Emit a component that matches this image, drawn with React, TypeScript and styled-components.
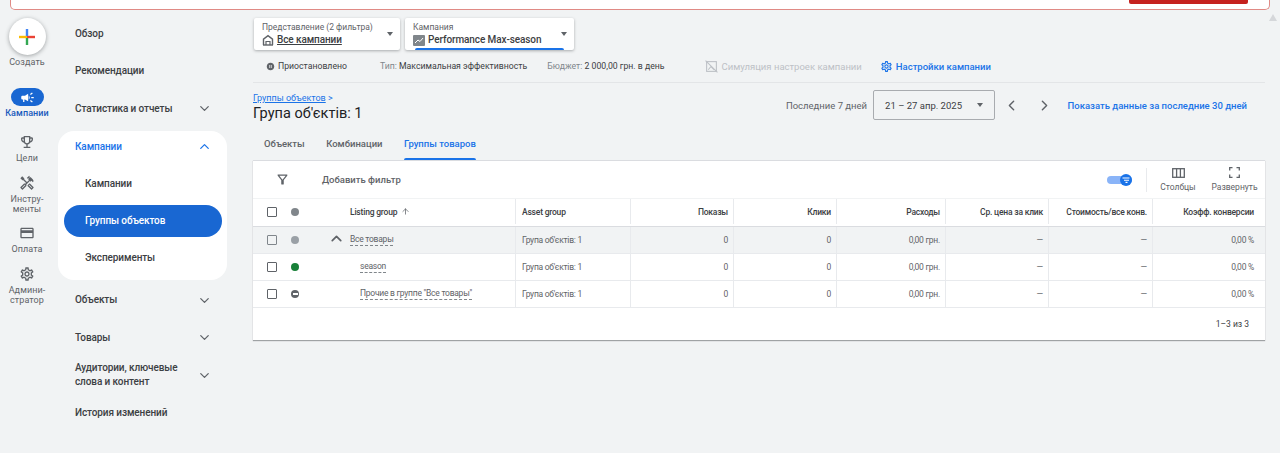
import React from 'react';
import styled, { createGlobalStyle } from 'styled-components';
import { ChevronDown, ChevronUp, ChevronLeft, ChevronRight, ArrowUp } from 'lucide-react';
import {
    MdCampaign,
    MdOutlineEmojiEvents,
    MdOutlineHandyman,
    MdOutlineCreditCard,
    MdOutlineSettings,
    MdOutlineFilterAlt,
    MdPauseCircleFilled,
} from 'react-icons/md';

const GlobalStyle = createGlobalStyle`
    html, body {
        margin: 0;
        padding: 0;
        background: #f1f3f4;
        overflow: hidden;
    }
    body {
        font-family: Roboto, 'Liberation Sans', sans-serif;
        color: #3c4043;
    }
`;

const Page = styled.div`
    width: 1280px;
    height: 453px;
    display: flex;
    flex-direction: column;
    position: relative;
    overflow: hidden;
`;

const Banner = styled.div`
    height: 9px;
    margin: 0 10px;
    padding-right: 21px;
    background: #fff;
    border: 1px solid #e08a85;
    border-top: 0;
    border-radius: 0 0 5px 5px;
    display: flex;
    justify-content: flex-end;
`;

const BannerButton = styled.div`
    width: 119px;
    height: 4px;
    background: #c5221f;
    border-radius: 0 0 2px 2px;
`;

const ScrollArrow = styled.div`
    position: absolute;
    top: 14px;
    right: 3px;
    width: 0;
    height: 0;
    border-left: 4.5px solid transparent;
    border-right: 4.5px solid transparent;
    border-bottom: 7px solid #d5d7da;
`;

const Body = styled.div`
    display: flex;
    flex: 1;
`;

const Rail = styled.nav`
    width: 54px;
    flex: none;
    display: flex;
    flex-direction: column;
    align-items: center;
    padding-top: 8px;
`;

const CreateButton = styled.div`
    width: 37px;
    height: 37px;
    border-radius: 50%;
    background: #fff;
    box-shadow: 0 1px 4px rgba(60, 64, 67, 0.45);
    display: flex;
    align-items: center;
    justify-content: center;
`;

const RailLabel = styled.span<{ $active?: boolean; $top?: number }>`
    font-size: 9px;
    line-height: 10px;
    margin-top: ${p => p.$top ?? 3}px;
    text-align: center;
    white-space: nowrap;
    color: ${p => (p.$active ? '#185abc' : '#5f6368')};
    font-weight: ${p => (p.$active ? 500 : 400)};
    letter-spacing: 0.1px;
`;

const RailItem = styled.div<{ $gap: number }>`
    display: flex;
    flex-direction: column;
    align-items: center;
    margin-top: ${p => p.$gap}px;
    color: #5f6368;
`;

const ActivePill = styled.div`
    width: 33px;
    height: 18px;
    border-radius: 9px;
    background: #1967d2;
    color: #fff;
    display: flex;
    align-items: center;
    justify-content: center;
`;

const Nav = styled.nav`
    width: 169px;
    margin-left: 4px;
    flex: none;
    padding-top: 5px;
`;

const NavRow = styled.div<{ $sub?: boolean; $open?: boolean; $height?: number }>`
    height: ${p => p.$height ?? 37.5}px;
    display: flex;
    align-items: center;
    justify-content: space-between;
    padding: 0 15px 0 ${p => (p.$sub ? 27 : 17)}px;
    font-size: 10px;
    font-weight: 500;
    line-height: 14px;
    letter-spacing: -0.1px;
    color: ${p => (p.$open ? '#1a73e8' : '#3c4043')};
`;

const NavCard = styled.div`
    background: #fff;
    border-radius: 16px;
    margin: 3px 0 2px;
`;

const SelectedPill = styled.div`
    height: 32px;
    margin: 0 5.5px 0 6px;
    padding-left: 21px;
    border-radius: 16px;
    background: #1967d2;
    color: #fff;
    font-size: 10px;
    font-weight: 500;
    letter-spacing: -0.1px;
    display: flex;
    align-items: center;
`;

const Main = styled.main`
    width: 1012px;
    margin-left: 26px;
    flex: none;
    padding-top: 8px;
`;

const PickerRow = styled.div`
    display: flex;
    gap: 5px;
    padding-left: 1px;
`;

const Picker = styled.div<{ $width: number }>`
    width: ${p => p.$width}px;
    height: 32px;
    box-sizing: border-box;
    padding: 4px 8px 0;
    background: #fff;
    border-radius: 2px;
    box-shadow: 0 1px 3px rgba(60, 64, 67, 0.4);
    position: relative;
`;

const PickerLabel = styled.div`
    font-size: 8.5px;
    line-height: 11px;
    color: #5f6368;
`;

const PickerValue = styled.div`
    display: flex;
    align-items: center;
    gap: 3px;
    font-size: 10px;
    line-height: 14px;
    font-weight: 500;
    letter-spacing: -0.1px;
    color: #3c4043;
`;

const Underlined = styled.span`
    text-decoration: underline;
`;

const Caret = styled.span`
    position: absolute;
    top: 14px;
    right: 7px;
    border-left: 3.5px solid transparent;
    border-right: 3.5px solid transparent;
    border-top: 4px solid #5f6368;
`;

const PickerBar = styled.span`
    position: absolute;
    left: 10px;
    bottom: 0;
    width: 149px;
    height: 2px;
    background: #1a73e8;
    border-radius: 2px 2px 0 0;
`;

const StatusRow = styled.div`
    height: 32px;
    display: flex;
    align-items: center;
    border-bottom: 1px solid #e3e5e7;
    font-size: 8.7px;
    color: #3c4043;
`;

const StatusPart = styled.span<{ $left: number }>`
    margin-left: ${p => p.$left}px;
    white-space: pre;
`;

const PausedState = styled.span`
    margin-left: 13px;
    display: flex;
    align-items: center;
    gap: 3px;
    color: #3c4043;
`;

const Muted = styled.span`
    color: #80868b;
`;

const StatusLink = styled.span<{ $left: number; $off?: boolean }>`
    margin-left: ${p => p.$left}px;
    display: flex;
    align-items: center;
    gap: ${p => (p.$off ? 4 : 3)}px;
    font-size: 9.5px;
    font-weight: ${p => (p.$off ? 400 : 500)};
    color: ${p => (p.$off ? '#bdc1c6' : '#1a73e8')};
`;

const TitleRow = styled.div`
    height: 45px;
    display: flex;
    align-items: flex-start;
    justify-content: space-between;
`;

const TitleBlock = styled.div`
    padding-top: 10px;
`;

const Crumb = styled.div`
    font-size: 9px;
    line-height: 10px;
    color: #1a73e8;
    span {
        text-decoration: underline;
    }
`;

const Title = styled.h1`
    margin: 1px 0 0;
    font-size: 14.5px;
    line-height: 20px;
    font-weight: 400;
    color: #202124;
`;

const DateTools = styled.div`
    height: 30px;
    margin: 7px 18px 0 0;
    display: flex;
    align-items: center;
    font-size: 9.5px;
    color: #5f6368;
`;

const DateBox = styled.div`
    width: 122px;
    height: 30px;
    box-sizing: border-box;
    margin-left: 6px;
    padding: 0 11px;
    border: 1px solid #a8abaf;
    border-radius: 2px;
    display: flex;
    align-items: center;
    justify-content: space-between;
    color: #3c4043;
`;

const DateCaret = styled(Caret)`
    position: static;
`;

const PagerIcons = styled.div`
    display: flex;
    gap: 16px;
    margin: 0 15px 0 7.5px;
    color: #5f6368;
`;

const DateLink = styled.span`
    color: #1a73e8;
    font-weight: 500;
`;

const Tabs = styled.div`
    height: 32px;
    display: flex;
    align-items: stretch;
    gap: 21.5px;
    padding-left: 11px;
`;

const Tab = styled.div<{ $active?: boolean }>`
    display: flex;
    align-items: center;
    padding-bottom: 1px;
    font-size: 9.5px;
    font-weight: 500;
    color: ${p => (p.$active ? '#1a73e8' : '#5f6368')};
    position: relative;
    &::after {
        content: '';
        display: ${p => (p.$active ? 'block' : 'none')};
        position: absolute;
        left: 0;
        right: 0;
        bottom: 0;
        height: 2px;
        background: #1a73e8;
        border-radius: 2px 2px 0 0;
    }
`;

const Card = styled.section`
    background: #fff;
    border-top: 1px solid #dadce0;
    box-shadow: 0 1px 1px rgba(60, 64, 67, 0.45);
`;

const Toolbar = styled.div`
    height: 37px;
    display: flex;
    align-items: center;
    color: #5f6368;
`;

const FilterIcon = styled.div`
    margin-left: 22px;
    display: flex;
    color: #5f6368;
`;

const AddFilter = styled.span`
    margin-left: 32px;
    font-size: 9.5px;
    font-weight: 500;
    flex: 1;
`;

const Toggle = styled.div`
    width: 25px;
    height: 8px;
    border-radius: 4px;
    background: #8ab4f8;
    position: relative;
    margin-right: 14.5px;
`;

const Knob = styled.div`
    position: absolute;
    right: 0;
    top: -2px;
    width: 12px;
    height: 12px;
    border-radius: 50%;
    background: #1a73e8;
    display: flex;
    align-items: center;
    justify-content: center;
`;

const ToolDivider = styled.div`
    width: 1px;
    height: 24px;
    background: #e8eaed;
    margin-right: 13px;
`;

const ToolButton = styled.div<{ $width: number; $left?: number }>`
    width: ${p => p.$width}px;
    margin-left: ${p => p.$left ?? 0}px;
    display: flex;
    flex-direction: column;
    align-items: center;
    gap: 4px;
    font-size: 8.5px;
    line-height: 10px;
    color: #5f6368;
`;

const ToolIconSlot = styled.div`
    height: 11px;
    display: flex;
    align-items: center;
`;

const ToolEnd = styled.div`
    width: 7.5px;
`;

const COLUMNS = '38px 8px 217px 115px 103px 103px 109px 103px 104px 112px';

const HeaderRow = styled.div`
    height: 29px;
    padding-bottom: 2px;
    display: grid;
    grid-template-columns: ${COLUMNS};
    border-top: 1px solid #f1f3f4;
    border-bottom: 1px solid #dadce0;
    box-sizing: border-box;
    font-size: 8.5px;
    font-weight: 500;
    letter-spacing: -0.2px;
    color: #3c4043;
`;

const Row = styled.div<{ $shaded?: boolean }>`
    height: 27px;
    display: grid;
    grid-template-columns: ${COLUMNS};
    background: ${p => (p.$shaded ? '#f1f3f4' : '#fff')};
    border-bottom: 1px solid #e8eaed;
    box-sizing: border-box;
    font-size: 8.5px;
    letter-spacing: -0.25px;
    color: #5f6368;
`;

const CheckCell = styled.div`
    display: flex;
    align-items: center;
    justify-content: center;
`;

const Check = styled.span<{ $soft?: boolean }>`
    width: 10px;
    height: 10px;
    box-sizing: border-box;
    border: 1px solid ${p => (p.$soft ? '#80868b' : '#5f6368')};
    border-radius: 1px;
`;

const DotCell = styled.div`
    display: flex;
    align-items: center;
    justify-content: center;
`;

const Dot = styled.span<{ $color: string }>`
    flex: none;
    width: 8px;
    height: 8px;
    border-radius: 50%;
    background: ${p => p.$color};
    position: relative;
`;

const Dash = styled.span`
    position: absolute;
    left: 1.5px;
    top: 3px;
    width: 5px;
    height: 2px;
    background: #fff;
`;

const ListingCell = styled.div<{ $indent: number }>`
    display: flex;
    align-items: center;
    padding-left: ${p => p.$indent}px;
    border-right: 1px solid #e8eaed;
    position: relative;
`;

const Tree = styled.span`
    position: absolute;
    left: 29px;
    top: 3px;
    color: #5f6368;
    display: flex;
`;

const SortArrow = styled(ArrowUp)`
    margin-left: 4px;
    color: #5f6368;
`;

const Dashed = styled.span`
    border-bottom: 1px dashed #80868b;
    line-height: 11px;
`;

const Cell = styled.div<{ $left?: boolean; $last?: boolean }>`
    display: flex;
    align-items: center;
    justify-content: ${p => (p.$left ? 'flex-start' : 'flex-end')};
    padding: ${p => (p.$left ? '0 0 0 6px' : p.$last ? '0 11px 0 0' : '0 5px 0 0')};
    border-right: ${p => (p.$last ? 0 : '1px solid #e8eaed')};
    white-space: nowrap;
`;

const Footer = styled.div`
    height: 32px;
    display: flex;
    align-items: center;
    justify-content: flex-end;
    padding-right: 16px;
    font-size: 8.5px;
    color: #3c4043;
`;

const PlusIcon = () => (
    <svg width="16" height="16" viewBox="0 0 16 16">
        <rect x="0" y="6.8" width="8" height="2.4" fill="#fbbc04" />
        <rect x="8" y="6.8" width="8" height="2.4" fill="#ea4335" />
        <rect x="6.8" y="0" width="2.4" height="7" fill="#4285f4" />
        <rect x="6.8" y="9" width="2.4" height="7" fill="#34a853" />
    </svg>
);

const HomeIcon = () => (
    <svg width="12" height="12" viewBox="0 0 12 12" fill="none" stroke="#5f6368" strokeWidth="1.4">
        <path d="M1.5 11V5.2L6 1.6l4.5 3.6V11" />
        <path d="M4 11V7.5h4V11" strokeWidth="1.2" />
        <path d="M1 11h10" />
    </svg>
);

const PerfIcon = () => (
    <svg width="12" height="11" viewBox="0 0 12 11">
        <rect width="12" height="11" rx="1" fill="#80868b" />
        <path d="M2 8l3-3 2 1.5L10 3" fill="none" stroke="#fff" strokeWidth="1" />
    </svg>
);

const SimIcon = () => (
    <svg width="13" height="13" viewBox="0 0 12 12" fill="none" stroke="#bdc1c6" strokeWidth="1">
        <rect x="1.5" y="1.5" width="9" height="9" />
        <path d="M0.5 0.5l11 11M3 9l2.5-3 3 3" />
    </svg>
);

const KnobIcon = () => (
    <svg width="8" height="8" viewBox="0 0 8 8" stroke="#fff" strokeWidth="1.1" fill="none">
        <path d="M0.5 2h7M2 4.2h5M3.5 6.4h2" />
    </svg>
);

const ExpandIcon = () => (
    <svg width="11" height="11" viewBox="0 0 11 11" fill="none" stroke="#5f6368" strokeWidth="1.3">
        <path d="M0.7 3.5V0.7h2.8M7.5 0.7h2.8v2.8M10.3 7.5v2.8H7.5M3.5 10.3H0.7V7.5" />
    </svg>
);

const ColumnsIcon = () => (
    <svg width="13" height="10" viewBox="0 0 13 10" fill="none" stroke="#5f6368" strokeWidth="1.3">
        <rect x="0.7" y="0.7" width="11.6" height="8.6" />
        <path d="M4.6 0.7v8.6M8.4 0.7v8.6" />
    </svg>
);

const rows = [
    { name: 'Все товары', indent: 51, shaded: true, dot: '#9aa0a6' },
    { name: 'season', indent: 61, dot: '#188038' },
    { name: 'Прочие в группе "Все товары"', indent: 61, dot: '#5f6368', excluded: true },
];

const App = () => {
    return (
        <Page>
            <GlobalStyle />
            <Banner>
                <BannerButton />
            </Banner>
            <ScrollArrow />
            <Body>
                <Rail>
                    <CreateButton>
                        <PlusIcon />
                    </CreateButton>
                    <RailLabel $top={2}>Создать</RailLabel>
                    <RailItem $gap={21}>
                        <ActivePill>
                            <MdCampaign size={15} />
                        </ActivePill>
                        <RailLabel $active $top={2}>
                            Кампании
                        </RailLabel>
                    </RailItem>
                    <RailItem $gap={16}>
                        <MdOutlineEmojiEvents size={16} />
                        <RailLabel>Цели</RailLabel>
                    </RailItem>
                    <RailItem $gap={12}>
                        <MdOutlineHandyman size={16} />
                        <RailLabel>
                            Инстру-
                            <br />
                            менты
                        </RailLabel>
                    </RailItem>
                    <RailItem $gap={11}>
                        <MdOutlineCreditCard size={16} />
                        <RailLabel>Оплата</RailLabel>
                    </RailItem>
                    <RailItem $gap={12}>
                        <MdOutlineSettings size={16} />
                        <RailLabel>
                            Админи-
                            <br />
                            стратор
                        </RailLabel>
                    </RailItem>
                </Rail>
                <Nav>
                    <NavRow>Обзор</NavRow>
                    <NavRow>Рекомендации</NavRow>
                    <NavRow>
                        Статистика и отчеты
                        <ChevronDown size={15} color="#5f6368" />
                    </NavRow>
                    <NavCard>
                        <NavRow $open $height={32}>
                            Кампании
                            <ChevronUp size={15} color="#1a73e8" />
                        </NavRow>
                        <NavRow $sub $height={42}>
                            Кампании
                        </NavRow>
                        <SelectedPill>Группы объектов</SelectedPill>
                        <NavRow $sub $height={43}>
                            Эксперименты
                        </NavRow>
                    </NavCard>
                    <NavRow>
                        Объекты
                        <ChevronDown size={15} color="#5f6368" />
                    </NavRow>
                    <NavRow>
                        Товары
                        <ChevronDown size={15} color="#5f6368" />
                    </NavRow>
                    <NavRow>
                        <span>
                            Аудитории, ключевые
                            <br />
                            слова и контент
                        </span>
                        <ChevronDown size={15} color="#5f6368" />
                    </NavRow>
                    <NavRow>История изменений</NavRow>
                </Nav>
                <Main>
                    <PickerRow>
                        <Picker $width={146}>
                            <PickerLabel>Представление (2 фильтра)</PickerLabel>
                            <PickerValue>
                                <HomeIcon />
                                <Underlined>Все кампании</Underlined>
                            </PickerValue>
                            <Caret />
                        </Picker>
                        <Picker $width={169}>
                            <PickerLabel>Кампания</PickerLabel>
                            <PickerValue>
                                <PerfIcon />
                                Performance Max-season
                            </PickerValue>
                            <Caret />
                            <PickerBar />
                        </Picker>
                    </PickerRow>
                    <StatusRow>
                        <PausedState>
                            <MdPauseCircleFilled size={9} color="#5f6368" />
                            Приостановлено
                        </PausedState>
                        <StatusPart $left={33}>
                            <Muted>Тип:</Muted> Максимальная эффективность
                        </StatusPart>
                        <StatusPart $left={20}>
                            <Muted>Бюджет:</Muted> 2 000,00 грн. в день
                        </StatusPart>
                        <StatusLink $left={40} $off>
                            <SimIcon />
                            Симуляция настроек кампании
                        </StatusLink>
                        <StatusLink $left={18}>
                            <MdOutlineSettings size={13} color="#1a73e8" />
                            Настройки кампании
                        </StatusLink>
                    </StatusRow>
                    <TitleRow>
                        <TitleBlock>
                            <Crumb>
                                <span>Группы объектов</span> &gt;
                            </Crumb>
                            <Title>Група об'єктів: 1</Title>
                        </TitleBlock>
                        <DateTools>
                            Последние 7 дней
                            <DateBox>
                                21 – 27 апр. 2025
                                <DateCaret />
                            </DateBox>
                            <PagerIcons>
                                <ChevronLeft size={17} />
                                <ChevronRight size={17} />
                            </PagerIcons>
                            <DateLink>Показать данные за последние 30 дней</DateLink>
                        </DateTools>
                    </TitleRow>
                    <Tabs>
                        <Tab>Объекты</Tab>
                        <Tab>Комбинации</Tab>
                        <Tab $active>Группы товаров</Tab>
                    </Tabs>
                    <Card>
                        <Toolbar>
                            <FilterIcon>
                                <MdOutlineFilterAlt size={15} />
                            </FilterIcon>
                            <AddFilter>Добавить фильтр</AddFilter>
                            <Toggle>
                                <Knob>
                                    <KnobIcon />
                                </Knob>
                            </Toggle>
                            <ToolDivider />
                            <ToolButton $width={36}>
                                <ToolIconSlot>
                                    <ColumnsIcon />
                                </ToolIconSlot>
                                Столбцы
                            </ToolButton>
                            <ToolButton $width={46} $left={15.5}>
                                <ToolIconSlot>
                                    <ExpandIcon />
                                </ToolIconSlot>
                                Развернуть
                            </ToolButton>
                            <ToolEnd />
                        </Toolbar>
                        <HeaderRow>
                            <CheckCell>
                                <Check />
                            </CheckCell>
                            <DotCell>
                                <Dot $color="#80868b" />
                            </DotCell>
                            <ListingCell $indent={51}>
                                Listing group
                                <SortArrow size={9} />
                            </ListingCell>
                            <Cell $left>Asset group</Cell>
                            <Cell>Показы</Cell>
                            <Cell>Клики</Cell>
                            <Cell>Расходы</Cell>
                            <Cell>Ср. цена за клик</Cell>
                            <Cell>Стоимость/все конв.</Cell>
                            <Cell $last>Коэфф. конверсии</Cell>
                        </HeaderRow>
                        {rows.map(r => (
                            <Row key={r.name} $shaded={r.shaded}>
                                <CheckCell>
                                    <Check $soft={r.shaded} />
                                </CheckCell>
                                <DotCell>
                                    <Dot $color={r.dot}>{r.excluded && <Dash />}</Dot>
                                </DotCell>
                                <ListingCell $indent={r.indent}>
                                    {r.shaded && (
                                        <Tree>
                                            <ChevronUp size={17} strokeWidth={2.4} />
                                        </Tree>
                                    )}
                                    <Dashed>{r.name}</Dashed>
                                </ListingCell>
                                <Cell $left>Група об'єктів: 1</Cell>
                                <Cell>0</Cell>
                                <Cell>0</Cell>
                                <Cell>0,00 грн.</Cell>
                                <Cell>—</Cell>
                                <Cell>—</Cell>
                                <Cell $last>0,00 %</Cell>
                            </Row>
                        ))}
                        <Footer>1–3 из 3</Footer>
                    </Card>
                </Main>
            </Body>
        </Page>
    );
};

export default App;
